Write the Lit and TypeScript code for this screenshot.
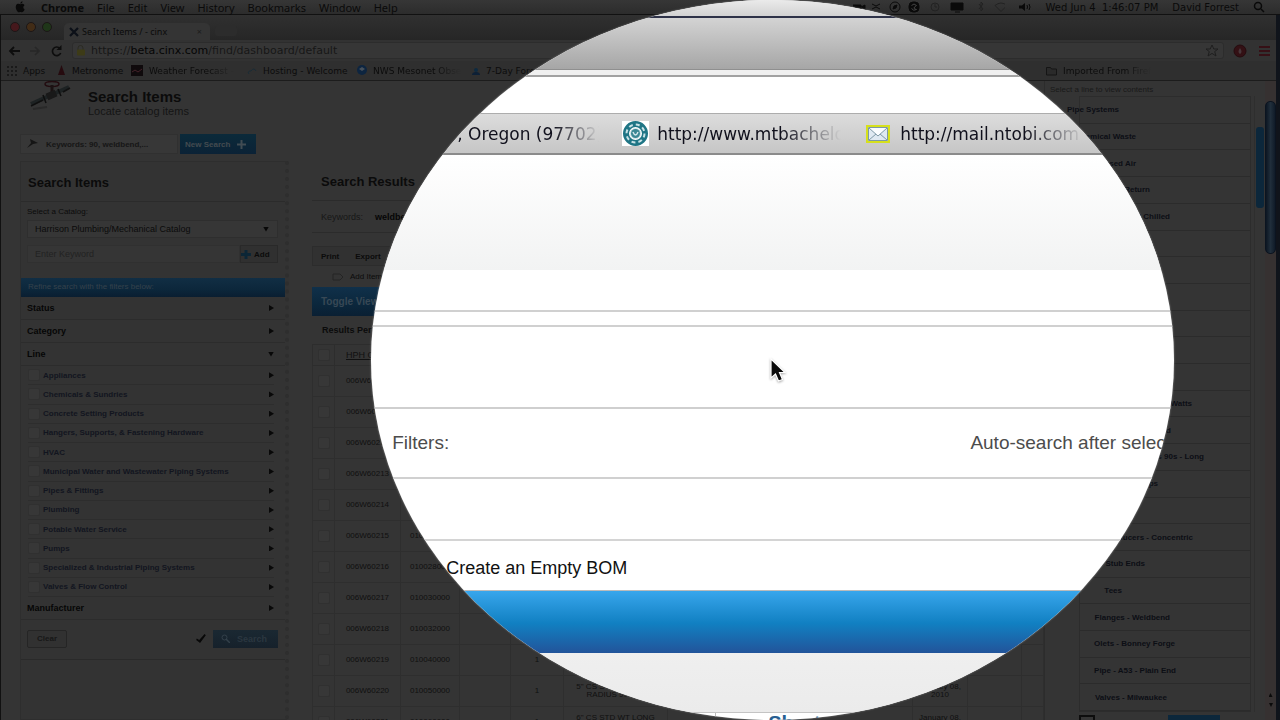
import { LitElement, html, css } from "lit";
import { customElement } from "lit/decorators.js";

interface TreeRow { text: string; end: number; }

const MENU = ["File", "Edit", "View", "History", "Bookmarks", "Window", "Help"];
const LINES: string[] = [
  "Appliances", "Chemicals & Sundries", "Concrete Setting Products",
  "Hangers, Supports, & Fastening Hardware", "HVAC",
  "Municipal Water and Wastewater Piping Systems", "Pipes & Fittings", "Plumbing",
  "Potable Water Service", "Pumps", "Specialized & Industrial Piping Systems",
  "Valves & Flow Control",
];
const TREE: TreeRow[] = [
  { text: "Pipe Systems", end: 39 },
  { text: "Chemical Waste", end: 56 },
  { text: "Compressed Air", end: 56 },
  { text: "Condensate Return", end: 70 },
  { text: "Heating and Chilled", end: 90 },
  { text: "", end: 0 }, { text: "", end: 0 }, { text: "", end: 0 },
  { text: "", end: 0 }, { text: "", end: 0 }, { text: "", end: 0 },
  { text: "Backflow - Watts", end: 112 },
  { text: "Grooved", end: 91 },
  { text: "Elbows 90s - Long", end: 124 },
  { text: "Caps", end: 78 },
  { text: "", end: 0 },
  { text: "Reducers - Concentric", end: 113 },
  { text: "Stub Ends", end: 65 },
  { text: "Tees", end: 42 },
  { text: "Flanges - Weldbend", end: 90 },
  { text: "Olets - Bonney Forge", end: 95 },
  { text: "Pipe - A53 - Plain End", end: 96 },
  { text: "Valves - Milwaukee", end: 87 },
];
const ROWS: string[][] = [
  ["006W60210", ""], ["006W60211", ""], ["006W60212", ""], ["006W60213", ""],
  ["006W60214", "010024000"], ["006W60215", "010026000"], ["006W60216", "010028000"],
  ["006W60217", "010030000"], ["006W60218", "010032000"],
  ["006W60219", "010040000", "1"],
  ["006W60220", "010050000", "1", "5\" CS STD WT LONG RADIUS 90 ELL", "January 08, 2010"],
  ["006W60221", "010060000", "1", "6\" CS STD WT LONG RADIUS 90 ELL", "January 08, 2010"],
];

@customElement("app-root")
export class AppRoot extends LitElement {
  static styles = css`
    :host { display: block; height: 100vh; position: relative; overflow: hidden; background: #10141b;
      font-family: "Liberation Sans", Arial, sans-serif; font-size: 8px; color: #0b0b0b; }
    * { box-sizing: border-box; }
    a { color: inherit; text-decoration: none; }
    h1, h2, p, ul { margin: 0; padding: 0; }
    ul { list-style: none; }
    button, input, select { font: inherit; color: inherit; margin: 0; padding: 0; border: 0; background: none; border-radius: 0; appearance: none; }
    svg { display: block; flex: none; }

    .desk { height: 100%; display: flex; flex-direction: column; }
    .menubar { height: 15px; display: flex; align-items: center; gap: 14px; padding: 0 15px 0 14px; flex: none;
      background: linear-gradient(#363636, #2c2c2c); border-bottom: 1px solid #111;
      font: 11px "Noto Sans", sans-serif; color: #0a0a0a; }
    .menubar b { font-weight: 700; }
    .items { display: flex; gap: 13px; }
    .status { margin-left: auto; display: flex; align-items: center; gap: 14px; }
    .clock { font: 10px "DejaVu Sans", sans-serif; }
    .window { flex: 1; min-height: 0; display: flex; flex-direction: column; margin-right: 4px; border-left: 1px solid #111; background: #343434; }
    .tabs { height: 25px; flex: none; display: flex; align-items: flex-end; padding-left: 9px; background: linear-gradient(#303030, #262626); }
    .lights { display: flex; gap: 6px; padding-bottom: 8px; }
    .light { width: 10px; height: 10px; border-radius: 50%; border: 1px solid #1c1717; }
    .red { background: #45181c; } .amber { background: #422c16; } .green { background: #1f3619; }
    .tab { width: 146px; height: 17px; margin-left: 12px; display: flex; align-items: center; gap: 3px; padding: 0 8px 0 5px;
      background: #343434; border-radius: 5px 5px 0 0; font: 9px "Noto Sans", sans-serif; color: #0b0b0b; }
    .tab .close { margin-left: auto; color: #1c1c1c; }
    .newtab { width: 22px; height: 10px; margin: 0 0 4px 5px; background: #2c2c2c; border-radius: 3px; }
    .toolbar { height: 21px; flex: none; display: flex; align-items: center; gap: 9px; padding: 0 6px 0 7px; background: #323232; }
    .address { flex: 1; height: 17px; display: flex; align-items: center; gap: 5px; padding: 0 4px; background: #363636; border: 1px solid #2c2c2c;
      border-radius: 3px; font: 11px "DejaVu Sans", sans-serif; color: #171717; }
    .address b { font-weight: 400; color: #050505; }
    .address .star { margin-left: auto; }
    .bookmarks { height: 20px; flex: none; display: flex; align-items: center; padding-left: 6px; background: #2f2f2f; border-bottom: 1px solid #1c1c1c;
      font: 9px "DejaVu Sans", sans-serif; color: #0c0c0c; }
    .bookmarks a { display: flex; align-items: center; gap: 6px; white-space: nowrap; }
    .w1 { width: 50px; } .w2 { width: 74px; } .w3 { width: 116px; } .w4 { width: 110px; } .w5 { width: 115px; }
    .last { margin-left: auto; width: 230px; }
    .fade { -webkit-mask-image: linear-gradient(90deg, #000 70%, transparent); mask-image: linear-gradient(90deg, #000 70%, transparent); }

    .page { flex: 1; min-height: 0; display: flex; overflow: hidden; }
    .main { flex: 1; min-width: 0; display: flex; flex-direction: column; padding-left: 19px; }
    .head { height: 53px; flex: none; display: flex; gap: 17px; padding-left: 7px; }
    .head h1 { font-size: 15px; line-height: 16px; padding-top: 8px; }
    .head p { font-size: 11px; line-height: 12px; color: #151515; }
    .searches { height: 27px; flex: none; display: flex; align-items: flex-start; gap: 2px; }
    .saved { width: 158px; height: 20px; display: flex; align-items: center; gap: 7px; padding-left: 6px; background: #373737; border: 1px solid #303030; font-weight: 700; font-size: 8px; color: #161616; }
    .new { width: 76px; height: 20px; display: flex; align-items: center; gap: 7px; padding-left: 5px; background: linear-gradient(#0b2a3a, #0b2236); color: #434b50; font-weight: 700; font-size: 8px; cursor: pointer; }
    .cols { flex: 1; min-height: 0; display: flex; gap: 23px; }
    .side { width: 269px; flex: none; border: 1px solid #2e2e2e; border-right: 4px dotted #2e2e2e; background: #333; }
    .side h2, .results h2 { height: 40px; line-height: 42px; font-size: 13px; padding-left: 7px; border-bottom: 1px solid #2b2b2b; }
    .results h2 { padding-left: 9px; }
    .catalog { display: flex; flex-direction: column; padding: 4px 7px 0 6px; height: 76px; }
    .catalog label { font-size: 8px; line-height: 11px; }
    .pick { display: flex; align-items: center; height: 18px; margin-top: 3px; border: 1px solid #2e2e2e; background: #363636; padding: 0 8px 0 7px; }
    .pick select { flex: 1; min-width: 0; font-size: 9px; }
    .addrow { display: flex; height: 18px; margin-top: 7px; }
    .addrow input { flex: 1; min-width: 0; padding-left: 7px; background: #353535; border: 1px solid #303030; font-size: 9px; }
    .addrow input::placeholder { color: #222; }
    .addrow button { width: 38px; display: flex; align-items: center; gap: 3px; background: #303030; border: 1px solid #292929; font-size: 8px; font-weight: 700; }
    .refine { height: 19px; line-height: 18px; padding-left: 7px; background: linear-gradient(#112e44, #0c273b 60%, #0a1e31); color: #35424c; font-size: 8px; }
    .group { height: 23px; display: flex; align-items: center; justify-content: space-between; padding: 0 11px 0 6px; border-bottom: 1px solid #2c2c2c; font-weight: 700; font-size: 9px; color: #060606; }
    .lines { height: 231px; display: flex; flex-direction: column; padding: 0 11px 0 7px; }
    .lines li { flex: 1; display: flex; align-items: center; border-bottom: 1px solid #2d2d2d; }
    .lines label { flex: 1; display: flex; align-items: center; gap: 3px; font-weight: 700; font-size: 8px; color: #12151f; }
    .box { width: 12px; height: 12px; border: 1px solid #303030; background: #373737; border-radius: 2px; }
    .arrow { width: 5px; height: 6px; background: #080808; clip-path: polygon(0 0, 100% 50%, 0 100%); }
    .down { width: 6px; height: 5px; background: #080808; clip-path: polygon(0 0, 100% 0, 50% 100%); }
    .actions { height: 40px; display: flex; align-items: center; gap: 6px; padding: 0 7px 2px 6px; border-bottom: 1px solid #2a2a2a; }
    .clear { width: 40px; height: 18px; border: 1px solid #252525; border-radius: 2px; background: #313131; margin-right: auto; font-size: 8px; font-weight: 700; color: #171717; }
    .tick { width: 12px; height: 12px; background: #080808; clip-path: polygon(15% 50%, 35% 62%, 80% 12%, 90% 22%, 42% 88%, 10% 62%); }
    .search { width: 65px; height: 18px; display: flex; align-items: center; gap: 7px; padding-left: 8px; background: linear-gradient(#1a2832, #16212b); color: #2b3740; font-weight: 700; font-size: 9px; }

    .results { flex: 1; min-width: 0; }
    .kw { height: 32px; display: flex; align-items: center; gap: 12px; padding: 0 9px; border-bottom: 1px solid #2b2b2b; font-size: 9px; color: #171717; }
    .kw b { color: #060606; }
    .tools { height: 20px; margin-top: 13px; display: flex; align-items: center; gap: 16px; padding-left: 8px; background: #313131; border: 1px solid #2c2c2c; font-size: 8px; font-weight: 700; }
    .add { height: 21px; display: flex; align-items: center; gap: 6px; padding-left: 20px; font-size: 8px; }
    .toggle { height: 29px; line-height: 29px; padding-left: 9px; background: linear-gradient(#10304a, #0b273c 60%, #0a1f33); color: #384855; font-size: 10px; font-weight: 700; }
    .per { height: 28px; line-height: 28px; padding-left: 10px; font-size: 9px; font-weight: 700; }
    table { border-collapse: collapse; table-layout: fixed; width: 100%; text-align: center; font-size: 8px; line-height: 8px; color: #101010; border-left: 1px solid #2d2d2d; }
    th { height: 21px; padding: 0; border: 1px solid #2d2d2d; font-size: 9px; font-weight: 400; text-decoration: underline; }
    td { height: 31px; padding: 0; border: 1px solid #2e2e2e; overflow: hidden; }
    td .box, th .box { display: block; margin: 0 auto; }
    .c1 { width: 22px; } .c2 { width: 66px; } .c3 { width: 59px; } .c4 { width: 51px; } .c5 { width: 53px; } .c6 { width: 104px; } .c8 { width: 55px; } .c9 { width: 54px; }

    .content { width: 221px; flex: none; display: flex; flex-direction: column; border-left: 1px solid #2c2c2c; }
    .hint { height: 15px; line-height: 18px; font-size: 8px; color: #191919; padding-left: 5px; flex: none; }
    .treewrap { display: flex; padding-left: 34px; gap: 3px; }
    .tree { flex: 1; height: 616px; display: flex; flex-direction: column; border: 1px solid #2c2c2c; }
    .tree li { flex: 1; display: flex; align-items: center; border-bottom: 1px solid #2b2b2b; font-size: 8px; font-weight: 700; color: #0c0e14; white-space: nowrap; }
    .tree a { flex: none; display: flex; justify-content: flex-end; }
    .innerbar { width: 11px; border-left: 1px solid #2e2e2e; padding: 31px 1px 0; }
    .innerbar div { height: 81px; background: #0c273b; border-radius: 3px; }
    .foot { display: flex; align-items: center; padding-left: 34px; margin-top: 3px; height: 14px; font-size: 8px; }
    .foot i { width: 16px; height: 14px; border: 2px solid #0d0d0d; }
    .foot span { margin-left: 28px; flex: 1; }
    .foot button { width: 52px; height: 14px; margin-right: 45px; background: #0c273b; color: #45525e; font-size: 8px; }
    .outerbar { width: 11px; flex: none; background: #363131; padding: 20px 0 0; display: flex; flex-direction: column; }
    .outerbar div { height: 153px; background: linear-gradient(90deg, #0c1622, #202e3b, #101b28); border-radius: 5px; border: 1px solid #0b1420; }
    .outerbar i { align-self: center; width: 4px; height: 4px; background: #0a0a0a; clip-path: polygon(50% 0, 100% 100%, 0 100%); }
    .outerbar .up { margin-top: auto; }
    .outerbar .dn { margin: 6px 0 13px; transform: rotate(180deg); }

    .lens { position: absolute; left: 29%; top: 0; width: 62.75%; height: 100%; border-radius: 50%; overflow: hidden; background: #fff; box-shadow: 0 0 2px #999;
      display: flex; flex-direction: column; color: #4c4c4c; font-size: 19px; }
    .lens > * { flex: none; }
    .l-menu { height: 18px; background: linear-gradient(#eaeaea, #d2d2d2); border-bottom: 2px solid #2e3248; }
    .l-tabs { height: 52px; background: linear-gradient(#d3d3d3, #a6a6a6); border-bottom: 1px solid #8f8f8f; }
    .l-tool { height: 7px; background: #f0f0f0; border-bottom: 2px solid #a2a2a2; }
    .l-addr { height: 36px; }
    .l-marks { height: 42px; display: flex; align-items: center; padding-left: 86px; background: linear-gradient(#dcdcdc, #c6c6c6); border-top: 1px solid #adadad; border-bottom: 2px solid #8b8b8b;
      font: 17px "DejaVu Sans", sans-serif; color: #10101c; }
    .l-marks a { display: flex; align-items: center; white-space: nowrap; }
    .l-marks .a { width: 165px; } .l-marks .b { width: 244px; gap: 8px; } .l-marks .c { gap: 10px; }
    .lens .fade { width: 184px; overflow: hidden; -webkit-mask-image: linear-gradient(90deg, #000 68%, transparent); mask-image: linear-gradient(90deg, #000 68%, transparent); }
    .lens .a .fade { width: 142px; }
    .l-grad { height: 115px; background: linear-gradient(#fff, #f2f3f3); }
    .l-gap { height: 42px; border-bottom: 2px solid #d0d0d0; }
    .l-strip { height: 15px; border-bottom: 2px solid #d0d0d0; }
    .l-blank { height: 82px; border-bottom: 2px solid #cfcfcf; }
    .l-filters { height: 70px; display: flex; align-items: center; justify-content: space-between; padding: 0 0 0 21px; border-bottom: 2px solid #d0d0d0; white-space: nowrap; }
    .l-filters span:last-child { width: 204px; }
    .l-blank2 { height: 62px; border-bottom: 2px solid #d4d4d4; }
    .l-bom { height: 50px; display: flex; align-items: center; padding: 6px 0 0 75px; font-size: 18px; color: #111; border-bottom: 1px solid #bbb; }
    .l-blue { height: 62px; background: linear-gradient(#38a6ec, #1180c2 52%, #22549a); }
    .l-grey { height: 60px; background: linear-gradient(#efefef, #ebebeb); border-bottom: 1px solid #c4c4c4; }
    .l-head { height: 30px; display: flex; font-size: 20px; font-weight: 700; line-height: 20px; color: #285f92; }
    .l-head span { width: 345px; border-right: 1px solid #bbb; margin-right: 52px; }
    .cursor { position: absolute; left: 60.1%; top: 355px; filter: drop-shadow(0 1px 1px #0005); }
  `;

  private tree(r: TreeRow) {
    return html`<li>${r.text ? html`<a href="#" style="width:${r.end}px">${r.text}</a>` : ""}</li>`;
  }

  render() {
    return html`
      <div class="desk">
        <nav class="menubar">
          <svg width="13" height="12" viewBox="0 0 13 12"><path d="M9 3C8 2.600 7.200 3.200 6.500 3.200S5 2.600 4 2.800C1.500 3.400 1.300 6.500 2.500 9c1 2 2 2.600 3 2.200.8-.3 1.200-.3 2 0 1 .4 2.200-.6 3.100-2.700-1.700-1-1.700-3.400-.1-4.300C10.100 3.500 9.600 3.100 9 3zM8.500.2C7.200.5 6.300 1.400 6.400 2.700 7.700 2.600 8.500 1.500 8.500.2z" fill="#090909"/></svg>
          <div class="items"><b>Chrome</b>
          ${MENU.map((m) => html`<span>${m}</span>`)}</div>
          <div class="status">
            <svg width="152" height="12" viewBox="0 0 152 12" fill="none" stroke="#0a0a0a">
              <path d="M0 4h8v5H0zM8 6l4-2v5" fill="#0a0a0a"/><path d="M19 3l4 2 4-2M19 8l4-2 4 2"/>
              <circle cx="42" cy="6" r="5"/><path d="M40 8l1-3 3-1-1 3z" fill="#0a0a0a"/>
              <rect x="56" y="1" width="10" height="10" rx="4" fill="#0a0a0a"/><path d="M58.500 4.500q2.500-3 5 0-5 3 0 4-3 2-5-1" stroke="#444"/>
              <circle cx="82" cy="6" r="4" stroke="#222"/><path d="M82 3v3h2" stroke="#222"/>
              <path d="M98 2h12v7H98zM102 11h5" fill="#0a0a0a"/><path d="M126 3l4 5-2 2V1l2 2-4 5M142 4.500q6-5 12 0l-6 6z" stroke="#222"/>
            </svg>
            <svg width="12" height="10" viewBox="0 0 12 10"><path d="M0 3.500h3L6 1v8L3 6.500H0z" fill="#090909"/><path d="M8 3q1 2 0 4M10 2q2 3 0 6" stroke="#090909" fill="none"/></svg>
            <span class="clock">Wed Jun 4&nbsp; 1:46:07 PM</span><span class="clock">David Forrest</span>
            <svg width="12" height="12" viewBox="0 0 12 12" fill="none" stroke="#090909" stroke-width="1.500"><circle cx="5" cy="5" r="3.500"/><path d="M8 8l3 3"/></svg>
          </div>
        </nav>
        <div class="window">
          <div class="tabs">
            <div class="lights"><span class="light red"></span><span class="light amber"></span><span class="light green"></span></div>
            <div class="tab">
              <svg width="10" height="10" viewBox="0 0 10 10"><path d="M1 1l8 8M9 1L1 9" stroke="#0c1018" stroke-width="2.200"/></svg>
              <span>Search Items / - cinx</span><span class="close">×</span>
            </div>
            <div class="newtab"></div>
          </div>
          <div class="toolbar">
            <svg width="12" height="12" viewBox="0 0 12 12"><path d="M6 2L2 6l4 4M2 6h10" stroke="#0d0d0d" stroke-width="1.800" fill="none"/></svg>
            <svg width="12" height="12" viewBox="0 0 12 12"><path d="M6 2l4 4-4 4M10 6H1" stroke="#272727" stroke-width="1.600" fill="none"/></svg>
            <svg width="13" height="12" viewBox="0 0 13 12"><path d="M10 3.500A4.300 4.300 0 1 0 10.700 8" stroke="#0d0d0d" stroke-width="1.700" fill="none"/><path d="M11.500 0v5h-5z" fill="#0d0d0d"/></svg>
            <div class="address">
              <svg width="9" height="11" viewBox="0 0 9 11"><path d="M1 5V3a2.500 2.500 0 0 1 5 0v2" stroke="#2b2b22" fill="none"/><rect y="4.500" width="8" height="6" rx="1" fill="#3d3b17"/></svg>
              <span>https://<b>beta.cinx.com</b>/find/dashboard/default</span>
              <svg class="star" width="14" height="13" viewBox="0 0 14 13"><path d="M7 1l1.800 4h4.200L9.700 7.600 11 12 7 9.400 3 12l1.300-4.400L1 5h4.200z" stroke="#1e1e1e" fill="none"/></svg>
            </div>
            <svg width="14" height="14" viewBox="0 0 14 14"><circle cx="7" cy="7" r="6" fill="#331014" stroke="#250b0e"/><path d="M7 4q3 4 0 6-3-2 0-6" fill="#47363a"/></svg>
            <svg width="14" height="12" viewBox="0 0 14 12"><path d="M3 2h11M3 6h11M3 10h11" stroke="#361016" stroke-width="2"/></svg>
          </div>
          <nav class="bookmarks">
            <a class="w1" href="#"><svg width="10" height="10" viewBox="0 0 10 10"><path d="M0 1h10M0 5h10M0 9h10" stroke="#1a1a1a" stroke-width="2" stroke-dasharray="2"/></svg>Apps</a>
            <a class="w2" href="#"><svg width="9" height="11" viewBox="0 0 9 11"><path d="M4.500 0L8 10H1z" fill="#260b0f"/></svg>Metronome</a>
            <a class="w3" href="#"><svg width="12" height="11" viewBox="0 0 12 11"><path d="M0 0h12v11H0z" fill="#0f0a0c"/><path d="M1 7l3-2 3 2 4-3" stroke="#45222a" fill="none"/></svg><span class="fade">Weather Forecast -</span></a>
            <a class="w4" href="#"><svg width="10" height="10" viewBox="0 0 10 10"><path d="M2 8q-2-3 2-3 3-4 5 0" stroke="#1a2c36" fill="none"/></svg>Hosting - Welcome</a>
            <a class="w5" href="#"><svg width="10" height="11" viewBox="0 0 10 11"><circle cx="5" cy="5" r="5" fill="#0d2540"/><path d="M2 4l3-2 3 2-3 2z" fill="#46505a"/></svg><span class="fade">NWS Mesonet Obse</span></a>
            <a href="#"><svg width="8" height="8" viewBox="0 0 8 8"><circle cx="4" cy="3" r="2" fill="#0d2a40"/><path d="M0 8q0-3 4-3t4 3z" fill="#0d2036"/></svg>7-Day Forecast</a>
            <a class="last" href="#"><svg width="11" height="10" viewBox="0 0 11 10"><path d="M.5 1.500h4l1 1.500h5v6H.5z" fill="#2a2a2a" stroke="#151515"/></svg><span class="fade">Imported From Firef</span></a>
          </nav>
          <div class="page">
            <main class="main">
              <header class="head">
                <svg width="44" height="34" viewBox="0 0 44 34"><ellipse cx="25" cy="3" rx="7" ry="2.500" fill="none" stroke="#230c10" stroke-width="1.500"/><path d="M25 4v8" stroke="#1b1213" stroke-width="3"/><path d="M4 23l38-17" stroke="#1d2223" stroke-width="4"/><path d="M4 25l12-6M36 11l7-4" stroke="#101010" stroke-width="1.500"/><path d="M16 14l3 8M31 8l3 7" stroke="#0e0e0e" stroke-width="1.500"/><path d="M20 16l9-4" stroke="#191919" stroke-width="7"/><path d="M6 28l14-2" stroke="#292929" stroke-width="2"/></svg>
                <div><h1>Search Items</h1><p>Locate catalog items</p></div>
              </header>
              <div class="searches">
                <div class="saved"><svg width="12" height="10" viewBox="0 0 12 10"><path d="M3 0l8 4-5 1-6 4 4-5z" fill="#151515"/></svg>Keywords: 90, weldbend,...</div>
                <button class="new">New Search<svg width="9" height="9" viewBox="0 0 9 9"><path d="M4.500 0v9M0 4.500h9" stroke="#414c53" stroke-width="2"/></svg></button>
              </div>
              <div class="cols">
                <section class="side">
                  <h2>Search Items</h2>
                  <div class="catalog">
                    <label for="cat">Select a Catalog:</label>
                    <div class="pick"><select id="cat"><option>Harrison Plumbing/Mechanical Catalog</option></select><span class="down"></span></div>
                    <div class="addrow"><input aria-label="Enter Keyword" placeholder="Enter Keyword"><button><svg width="10" height="9" viewBox="0 0 10 9"><path d="M5 0v9M0 4.500h10" stroke="#0c2636" stroke-width="3"/></svg>Add</button></div>
                  </div>
                  <p class="refine">Refine search with the filters below:</p>
                  <div class="group">Status<span class="arrow"></span></div>
                  <div class="group">Category<span class="arrow"></span></div>
                  <div class="group">Line<span class="down"></span></div>
                  <ul class="lines">${LINES.map((l) => html`<li><label><input class="box" type="checkbox">${l}</label><span class="arrow"></span></li>`)}</ul>
                  <div class="group">Manufacturer<span class="arrow"></span></div>
                  <div class="actions"><button class="clear">Clear</button><input class="tick" type="checkbox" aria-label="Auto-search" checked><button class="search"><svg width="9" height="9" viewBox="0 0 9 9"><circle cx="3.500" cy="3.500" r="2.500" stroke="#33404a" fill="none"/><path d="M5 5l4 4" stroke="#33404a" stroke-width="1.500"/></svg>Search</button></div>
                </section>
                <section class="results">
                  <h2>Search Results</h2>
                  <p class="kw">Keywords: <b>weldbend, 90</b></p>
                  <div class="tools"><span>Print</span><span>Export</span></div>
                  <div class="add"><svg width="12" height="8" viewBox="0 0 12 8"><path d="M1 1h7l3 3-3 3H1z" stroke="#242424" fill="none"/></svg>Add Items to BOM</div>
                  <div class="toggle">Toggle View</div>
                  <p class="per">Results Per Page</p>
                  <table>
                    <colgroup><col class="c1"><col class="c2"><col class="c3"><col class="c4"><col class="c5"><col class="c6"><col><col class="c8"><col class="c9"><col class="c1"></colgroup>
                    <tr><th><input class="box" type="checkbox" aria-label="All rows"></th><th>HPH Code</th><th></th><th></th><th></th><th></th><th></th><th></th><th></th><th></th></tr>
                    ${ROWS.map((r) => html`<tr><td><input class="box" type="checkbox" aria-label=${r[0]}></td><td>${r[0]}</td><td>${r[1]}</td><td></td><td>${r[2]}</td><td>${r[3]}</td><td></td><td>${r[4]}</td><td></td><td></td></tr>`)}
                  </table>
                </section>
              </div>
            </main>
            <aside class="content">
              <p class="hint">Select a line to view contents</p>
              <div class="treewrap"><ul class="tree">${TREE.map((r) => this.tree(r))}</ul><div class="innerbar"><div></div></div></div>
              <div class="foot"><i></i><span>1 Item</span><button>Add Item</button></div>
            </aside>
            <div class="outerbar"><div></div><i class="up"></i><i class="dn"></i></div>
          </div>
        </div>
      </div>
      <section class="lens">
        <div class="l-menu"></div><div class="l-tabs"></div><div class="l-tool"></div><div class="l-addr"></div>
        <nav class="l-marks">
          <a class="a" href="#"><span class="fade">, Oregon (97702)</span></a>
          <a class="b" href="#"><svg width="27" height="25" viewBox="0 0 27 25"><path d="M0 0h27v25H0z" fill="#fff"/><circle cx="13.500" cy="12.500" r="9.500" fill="none" stroke="#1f7585" stroke-width="6"/><circle cx="13.500" cy="12.500" r="9" fill="none" stroke="#c8e2e6" stroke-width="2" stroke-dasharray="4 3.070"/><circle cx="13.500" cy="12.500" r="5.500" fill="#cfe3e7"/><circle cx="13.500" cy="12.500" r="4.500" fill="#3a8794"/><path d="M11 11q2.500 6 5 0" stroke="#d5e8ec" stroke-width="1.500" fill="none"/></svg><span class="fade">http://www.mtbachelor</span></a>
          <a class="c" href="#"><svg width="24" height="18" viewBox="0 0 24 18"><rect x="1" y="1" width="22" height="16" fill="#e9f0f6" stroke="#d6e01c" stroke-width="2"/><path d="M2.500 2.500h19v13h-19z" fill="#dfe9f2" stroke="#7d9aa5"/><path d="M3 15l7-6M21 15l-7-6M3 3l9 8 9-8" stroke="#809aa8" fill="#fbfdff"/></svg><span class="fade">http://mail.ntobi.com</span></a>
        </nav>
        <div class="l-grad"></div><div class="l-gap"></div><div class="l-strip"></div><div class="l-blank"></div>
        <div class="l-filters"><span>Filters:</span><span>Auto-search after selection</span></div>
        <div class="l-blank2"></div>
        <div class="l-bom">Create an Empty BOM</div>
        <div class="l-blue"></div><div class="l-grey"></div>
        <div class="l-head"><span></span>Short</div>
      </section>
      <svg class="cursor" width="18" height="28" viewBox="0 0 18 28"><path d="M2 4v19l4.500-4 3 7 4-1.500-3-7H16z" fill="#0a0a0a" stroke="#fff" stroke-width="1.200"/></svg>
    `;
  }
}
